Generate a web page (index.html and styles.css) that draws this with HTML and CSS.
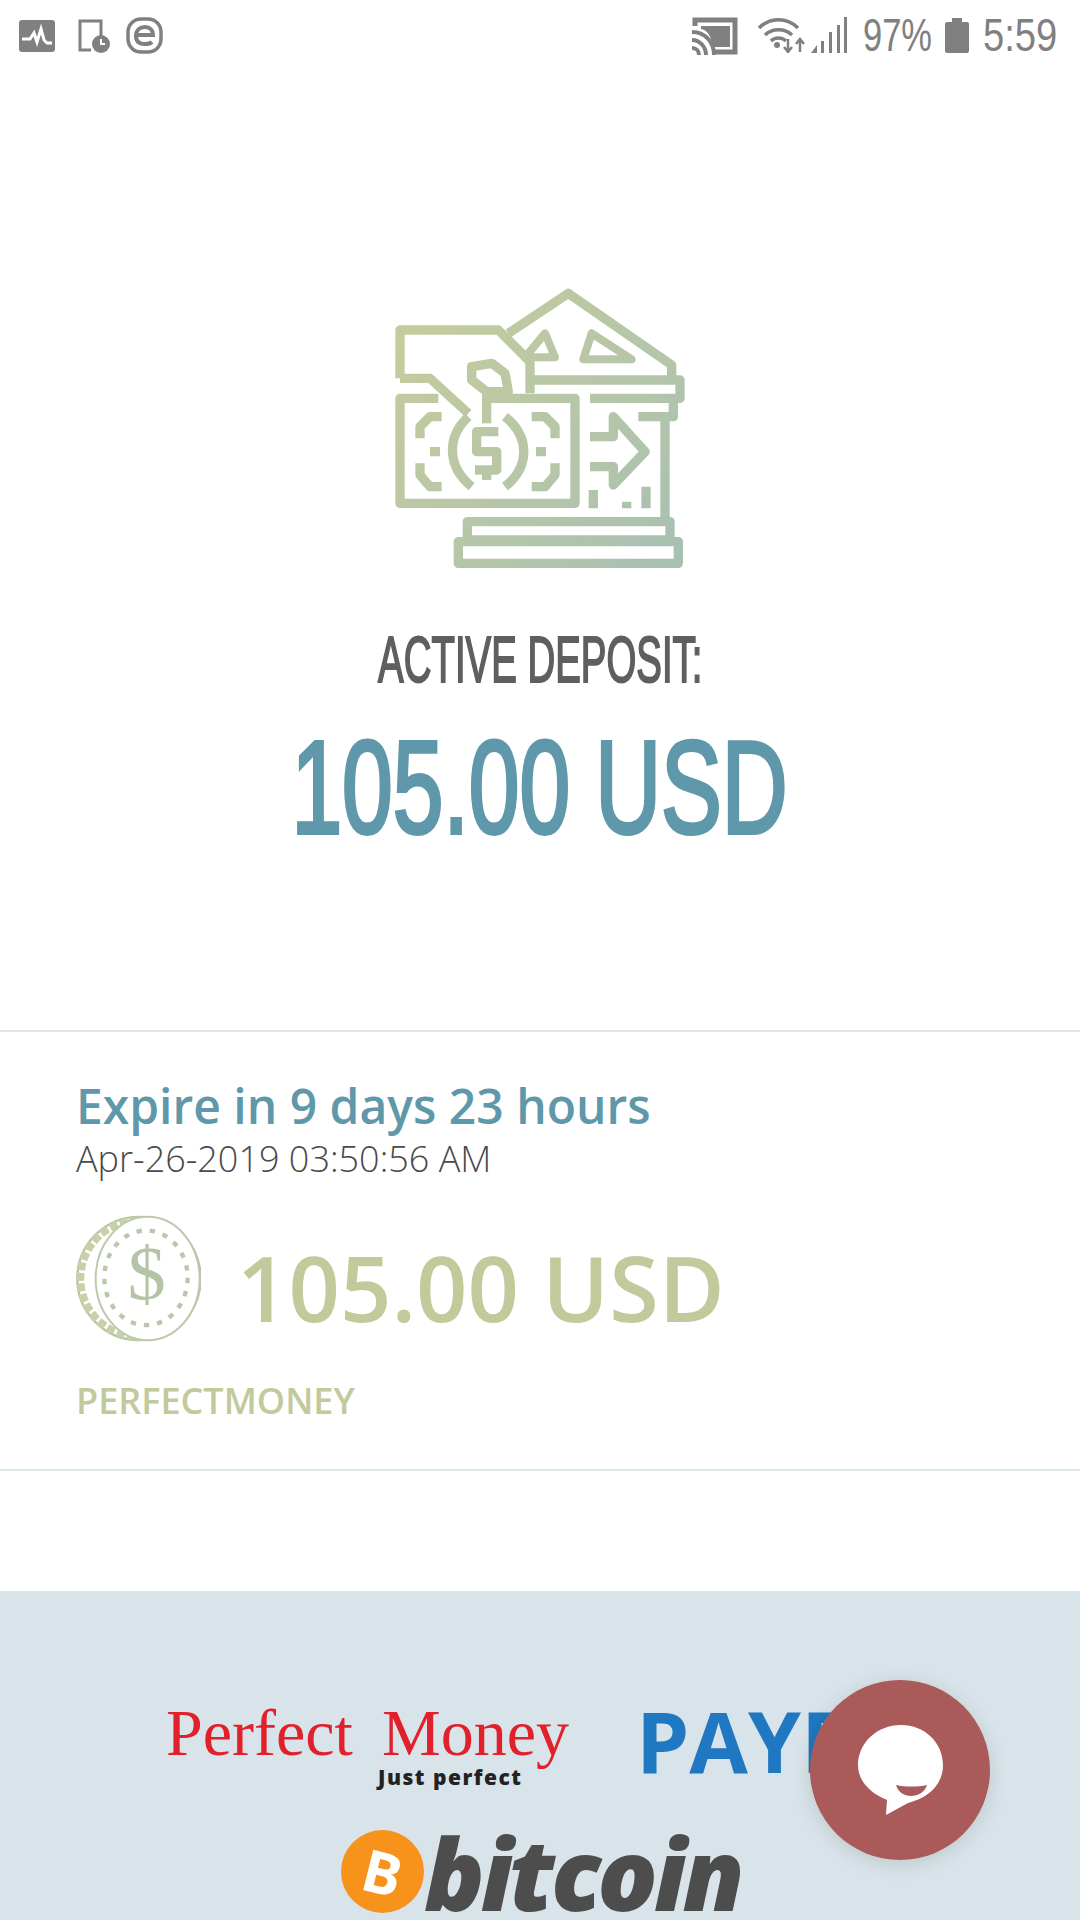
FILE: index.html
```html
<!DOCTYPE html>
<html lang="en">
<head>
  <meta charset="UTF-8" />
  <meta name="viewport" content="width=device-width, initial-scale=1.0"/>
  <title>Active Deposit</title>
  <link rel="stylesheet" href="styles.css">
</head>
<body>
  <div class="status-bar">
    <div class="status-left">
      <svg class="st-pulse" viewBox="0 0 36 32"><rect width="36" height="32" rx="3" fill="#808080"/><path d="M3 19h8l4-6 3 9 4-13 3 11 3 3h5" fill="none" stroke="#fff" stroke-width="3"/></svg>
      <svg class="st-clock" viewBox="0 0 32 34"><path d="M13 31H2V2h21v17" fill="none" stroke="#808080" stroke-width="3"/><circle cx="23" cy="25" r="9" fill="#808080"/><path d="M23 20v5h4" fill="none" stroke="#fff" stroke-width="2"/></svg>
      <svg class="st-e" viewBox="0 0 37 37"><rect x="2" y="2" width="33" height="33" rx="13" fill="none" stroke="#808080" stroke-width="3.5"/><path d="M10 18h17c0-5-3-8-8-8s-9 3-9 9 4 8 9 8c3 0 6-1 7-2" fill="none" stroke="#808080" stroke-width="4"/></svg>
    </div>
    <div class="status-right">
      <svg class="st-cast" viewBox="0 0 46 38"><path d="M3 9V3h40v32H22" fill="none" stroke="#808080" stroke-width="5"/><path d="M9 9h29v21H20C20 19 15 13 9 12z" fill="#808080"/><path d="M0 15c13 0 22 10 22 23M0 23c8 0 14 7 14 15M0 31c4 0 7 3 7 7" fill="none" stroke="#808080" stroke-width="4"/></svg>
      <svg class="st-wifi" viewBox="0 0 49 36"><path d="M2 11c11-11 28-11 39 0M8 18c7-7 20-7 27 0M14 24c4-4 11-4 15 0" fill="none" stroke="#808080" stroke-width="3.5"/><circle cx="20" cy="28" r="3" fill="#808080"/><path d="M31 22v13m-4-5 4 5 4-5M43 35V22m-4 5 4-5 4 5" fill="none" stroke="#808080" stroke-width="2.5"/></svg>
      <svg class="st-signal" viewBox="0 0 36 36"><path d="M0 36l6-8v8zM10 36V24h3v12zM18 36V15h3v21zM26 36V8h3v28zM33 36V0h3v36z" fill="#808080"/></svg>
      <span class="st-text st-pct">97%</span>
      <svg class="st-batt" viewBox="0 0 24 35"><path d="M7 0h10v4h5a2 2 0 0 1 2 2v27a2 2 0 0 1-2 2H2a2 2 0 0 1-2-2V6a2 2 0 0 1 2-2h5z" fill="#808080"/></svg>
      <span class="st-text st-time">5:59</span>
    </div>
  </div>

  <div class="hero">
    <svg class="bank-icon" viewBox="0 0 960 930">
      <defs>
        <linearGradient id="bankGrad" gradientUnits="userSpaceOnUse" x1="60" y1="180" x2="900" y2="880">
          <stop offset="0" stop-color="#c5cc9c"/>
          <stop offset="1" stop-color="#a8c0b2"/>
        </linearGradient>
      </defs>
      <g fill="none" stroke="url(#bankGrad)" stroke-width="28" stroke-linejoin="round">
        <path d="M60 325V180H355L450 275V370"/>
        <path d="M60 325H150L265 430"/>
        <path d="M385 190L565 70L875 285V320"/>
        <path d="M495 190L435 262H525Z" stroke-width="24"/>
        <path d="M635 190L610 268H755Z" stroke-width="24"/>
        <path d="M460 330H900V385H630"/>
        <path d="M775 440H880V385M855 440V750"/>
        <path d="M275 290L335 280L375 310L385 365H320L275 330Z"/>
        <path d="M320 370V460"/>
        <path d="M320 385H585V700H60V385H175"/>
        <path d="M185 440H150L120 470V505M120 580V615L150 650H185M455 440H495L525 470V505M525 580V615L495 650H455"/>
        <path d="M150 545H180M468 545H498"/>
        <path d="M265 440C200 500 200 590 275 650M375 440C450 500 450 590 375 650"/>
        <path d="M355 485H290V545H350V600H285M320 600V630"/>
        <path d="M630 500H700V440L795 545L700 645V590H630"/>
        <path d="M640 660V715M740 695V715M798 650V715"/>
        <path d="M262 755H870V810H262Z"/>
        <path d="M235 815H895V880H235Z"/>
      </g>
    </svg>
    <div class="hero-label">ACTIVE DEPOSIT:</div>
    <div class="hero-amount">105.00 USD</div>
  </div>

  <div class="deposit-row">
    <div class="expire">Expire in 9 days 23 hours</div>
    <div class="expire-date">Apr-26-2019 03:50:56 AM</div>
    <div class="amount-line">
      <svg class="coin" viewBox="75 80 375 380">
        <circle cx="264" cy="270" r="185" fill="#fff" stroke="#b5c4a6" stroke-width="7"/>
        <path d="M262 96A174 174 0 0 0 262 444" fill="none" stroke="#c8d0a8" stroke-width="24" stroke-dasharray="24 8"/>
        <ellipse cx="290" cy="270" rx="156" ry="185" fill="#fff" stroke="#bcc9ab" stroke-width="6"/>
        <ellipse cx="285" cy="268" rx="125" ry="142" fill="none" stroke="#b9c7ac" stroke-width="13" stroke-dasharray="16 24"/>
        <text class="coin-dollar" x="287" y="332" text-anchor="middle">$</text>
      </svg>
      <span class="amount-big">105.00 USD</span>
    </div>
    <div class="processor">PERFECTMONEY</div>
  </div>

  <div class="footer">
    <div class="logo-row">
      <div class="pm-logo">
        <div class="pm-name"><span class="pm-word">Perfect</span><span class="pm-word">Money</span></div>
        <div class="pm-tag">Just perfect</div>
      </div>
      <div class="payeer">PAYEER</div>
    </div>
    <div class="btc-logo">
      <span class="btc-coin"><span class="btc-b">B</span></span>
      <span class="btc-word">bitcoin</span>
    </div>
  </div>

  <div class="chat-fab">
    <svg class="chat-icon" viewBox="0 0 85 90">
      <path d="M43 0C67 0 85 18 85 40C85 60 70 73 50 78L28 90L29 75C12 68 0 56 0 40C0 18 19 0 43 0Z" fill="#fff"/>
      <path d="M38 60C48 62 59 62 69 60C67 67 60 71 53 71C46 71 40 67 38 60Z" fill="#ab5a5a"/>
    </svg>
  </div>
</body>
</html>
```

FILE: styles.css
```css
* {
  box-sizing: border-box;
}

html, body {
  margin: 0;
  padding: 0;
}

body {
  width: 1080px;
  height: 1920px;
  overflow: hidden;
  position: relative;
  background: #fff;
  font-family: 'Open Sans', sans-serif;
}

.status-bar {
  height: 72px;
  padding: 17px 24px 0 19px;
  display: flex;
  justify-content: space-between;
  align-items: flex-start;
}

.status-left, .status-right {
  display: flex;
  align-items: flex-start;
}

.st-pulse { width: 36px; height: 32px; margin-top: 3px; }
.st-clock { width: 32px; height: 34px; margin: 2px 0 0 23px; }
.st-e { width: 37px; height: 37px; margin-left: 16px; }
.st-cast { width: 46px; height: 38px; }
.st-wifi { width: 49px; height: 36px; margin-left: 19px; }
.st-signal { width: 36px; height: 36px; margin-left: 5px; }
.st-batt { width: 24px; height: 35px; margin: 1px 0 0 13px; }

.st-text {
  font-family: 'Liberation Sans', sans-serif;
  font-size: 46px;
  line-height: 36px;
  color: #808080;
  transform-origin: left center;
  white-space: nowrap;
}

.st-pct {
  width: 69px;
  margin-left: 16px;
  transform: scaleX(0.75);
}

.st-time {
  width: 73px;
  margin-left: 14px;
  transform: scaleX(0.83);
}

.hero {
  height: 960px;
  padding-top: 198px;
  border-bottom: 2px solid #d9e6ea;
  display: flex;
  flex-direction: column;
  align-items: center;
}

.bank-icon {
  width: 320px;
  height: 310px;
}

.hero-label {
  font-family: 'Liberation Sans', sans-serif;
  font-size: 64px;
  line-height: 80px;
  margin-top: 40px;
  color: #5f5f5f;
  -webkit-text-stroke: 2px #5f5f5f;
  transform: scaleX(0.6);
  white-space: nowrap;
}

.hero-amount {
  font-family: 'Liberation Sans', sans-serif;
  font-size: 132px;
  line-height: 120px;
  margin-top: 28px;
  color: #5f98aa;
  -webkit-text-stroke: 4px #5f98aa;
  transform: scaleX(0.69);
  white-space: nowrap;
}

.deposit-row {
  height: 439px;
  padding: 44px 76px 0;
  border-bottom: 2px solid #d9e6ea;
}

.expire {
  font-size: 48px;
  font-weight: 600;
  line-height: 60px;
  color: #5f98aa;
}

.expire-date {
  font-size: 36px;
  font-weight: 300;
  line-height: 46px;
  color: #4a4a4a;
}

.amount-line {
  display: flex;
  align-items: flex-start;
  margin-top: 33px;
}

.coin {
  width: 125px;
  height: 127px;
}

.coin-dollar {
  font-family: 'Liberation Serif', serif;
  font-size: 230px;
  fill: #b5c4a6;
}

.amount-big {
  font-size: 90px;
  font-weight: 600;
  line-height: 127px;
  color: #c2c99b;
  margin: 9px 0 0 36px;
}

.processor {
  font-size: 36px;
  font-weight: 600;
  line-height: 46px;
  margin-top: 27px;
  color: #c2c99b;
}

.footer {
  height: 329px;
  margin-top: 120px;
  background: #d8e4e9;
  padding-top: 108px;
}

.logo-row {
  display: flex;
  padding-left: 166px;
  height: 131px;
}

.pm-logo {
  width: 403px;
  padding-top: 4px;
}

.pm-name {
  display: flex;
  justify-content: space-between;
  font-family: 'Liberation Serif', serif;
  font-size: 66px;
  line-height: 60px;
  color: #e2202c;
}

.pm-tag {
  font-family: 'Open Sans', sans-serif;
  font-size: 21px;
  font-weight: 800;
  line-height: 24px;
  letter-spacing: 1.5px;
  margin: 2px 0 0 212px;
  color: #222;
}

.payeer {
  font-family: 'Open Sans', sans-serif;
  font-size: 85px;
  font-weight: 700;
  line-height: 82px;
  margin-left: 67px;
  color: #1f78c1;
}

.btc-logo {
  display: flex;
  align-items: center;
  padding-left: 341px;
}

.btc-coin {
  width: 83px;
  height: 83px;
  border-radius: 50%;
  background: #f7931a;
  display: flex;
  align-items: center;
  justify-content: center;
}

.btc-b {
  font-size: 58px;
  font-weight: 700;
  line-height: 1;
  color: #fff;
  transform: rotate(14deg);
}

.btc-word {
  font-size: 100px;
  font-weight: 800;
  font-style: italic;
  line-height: 76px;
  letter-spacing: -4px;
  color: #4d4d4d;
}

.chat-fab {
  position: absolute;
  left: 810px;
  top: 1680px;
  width: 180px;
  height: 180px;
  border-radius: 50%;
  background: #ab5a5a;
  box-shadow: 0 4px 20px rgba(0, 0, 0, 0.12);
  display: flex;
  align-items: center;
  justify-content: center;
}

.chat-icon {
  width: 85px;
  height: 90px;
}
```
